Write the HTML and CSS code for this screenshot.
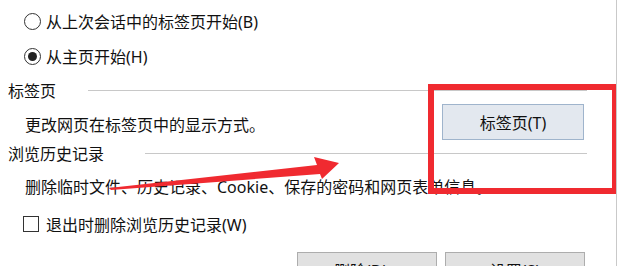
FILE: index.html
```html
<!DOCTYPE html>
<html lang="zh-CN">
<head>
  <meta charset="UTF-8" />
  <meta name="viewport" content="width=device-width, initial-scale=1.0"/>
  <title>Internet 选项</title>
  <link rel="stylesheet" href="styles.css">
</head>
<body>
  <div class="panel">
    <label class="option first">
      <span class="radio"></span>
      <span>从上次会话中的标签页开始(B)</span>
    </label>
    <label class="option second">
      <span class="radio checked"></span>
      <span>从主页开始(H)</span>
    </label>

    <div class="group-title tabs">
      <span>标签页</span>
      <span class="rule"></span>
    </div>
    <div class="tab-row">
      <span>更改网页在标签页中的显示方式。</span>
      <button type="button" class="btn btn-blue">标签页(T)</button>
    </div>

    <div class="group-title history">
      <span>浏览历史记录</span>
      <span class="rule"></span>
    </div>
    <div class="desc-row">删除临时文件、历史记录、Cookie、保存的密码和网页表单信息。</div>
    <label class="check-row">
      <span class="check"></span>
      <span>退出时删除浏览历史记录(W)</span>
    </label>

    <div class="button-row">
      <button type="button" class="btn">删除(D)...</button>
      <button type="button" class="btn">设置(S)</button>
    </div>

    <!-- 标注：红框和箭头 -->
    <div class="mark-box"></div>
    <svg class="mark-arrow" width="620" height="266" viewBox="0 0 620 266">
      <polygon fill="#f02a30" points="109,188 317,165 314,157 339,163 322,179 320,174 111,190" />
    </svg>
  </div>
</body>
</html>
```

FILE: styles.css
```css
body {
  margin: 0;
  background: #fff;
  font-family: "Noto Sans", "Noto Sans CJK SC", sans-serif;
  font-size: 16px;
  color: #111;
}
.panel {
  position: relative;
  width: 617px;
  height: 266px;
  overflow: hidden;
  border-right: 1px solid #c9c9c9;
  padding-top: 4px;
  box-sizing: border-box;
}
.option {
  display: flex;
  align-items: center;
  padding-left: 24px;
  height: 34px;
}
.option.second {
  height: 36px;
}
.radio {
  flex: none;
  position: relative;
  box-sizing: border-box;
  width: 17px;
  height: 17px;
  margin-right: 5px;
  border: 1px solid #333;
  border-radius: 50%;
  background: #fff;
}
.radio.checked::after {
  content: "";
  position: absolute;
  left: 3px;
  top: 3px;
  width: 9px;
  height: 9px;
  border-radius: 50%;
  background: #222;
}
.group-title {
  display: flex;
  align-items: center;
  padding-left: 8px;
  padding-right: 29px;
  height: 32px;
}
.group-title.history {
  height: 22px;
}
.group-title .rule {
  flex: 1;
  height: 1px;
  background: #c8c8c8;
  margin-left: 32px;
}
.group-title.history .rule {
  margin-left: 41px;
}
.tab-row {
  display: flex;
  align-items: center;
  justify-content: space-between;
  padding-left: 25px;
  padding-right: 32px;
  height: 36px;
}
.btn {
  font-family: inherit;
  font-size: 16px;
  color: #111;
  width: 140px;
  height: 36px;
  padding: 0;
  border: 1px solid #adadad;
  background: #e1e1e1;
}
.btn-blue {
  width: 142px;
  margin-bottom: 4px;
  border-color: #9fb4cc;
  background: #e3e8ef;
}
.desc-row {
  display: flex;
  align-items: center;
  padding-left: 25px;
  height: 44px;
}
.check-row {
  display: flex;
  align-items: center;
  padding-left: 23px;
  height: 32px;
}
.check {
  flex: none;
  box-sizing: border-box;
  width: 16px;
  height: 16px;
  margin-right: 7px;
  border: 1px solid #333;
  background: #fff;
}
.button-row {
  display: flex;
  justify-content: flex-end;
  gap: 8px;
  padding-right: 31px;
  margin-top: 12px;
}
.mark-box {
  position: absolute;
  left: 428px;
  top: 84px;
  width: 190px;
  height: 110px;
  box-sizing: border-box;
  border: 6px solid #f02a30;
}
.mark-arrow {
  position: absolute;
  left: 0;
  top: 0;
  pointer-events: none;
}
```
